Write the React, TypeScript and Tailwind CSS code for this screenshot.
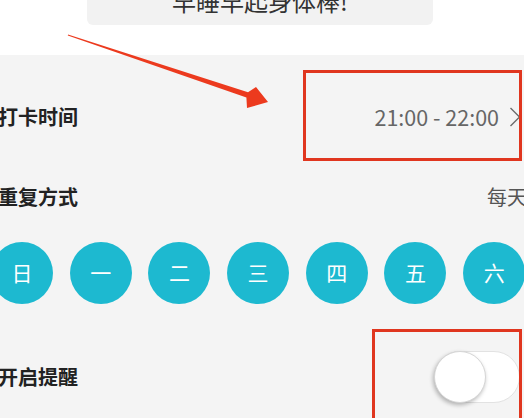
import React from 'react';

const days = ['日', '一', '二', '三', '四', '五', '六'];

function ChevronRight() {
  return (
    <svg width="12" height="22" viewBox="0 0 12 22" className="ml-[10px]">
      <path d="M1.5 2 L10.5 11 L1.5 20" fill="none" stroke="#6b6b6b" strokeWidth="1.4" />
    </svg>
  );
}

function Toggle() {
  return (
    <div className="relative h-[52px] w-[86px] rounded-full border border-[#e2e2e2] bg-white">
      <div className="absolute -left-px -top-px h-[52px] w-[52px] rounded-full border border-[#d6d6d6] bg-white shadow-[-1px_2px_4px_rgba(0,0,0,0.28)]" />
    </div>
  );
}

export default function App() {
  return (
    <div
      className="relative h-[418px] w-[524px] overflow-hidden bg-[#f4f4f4] text-[#222]"
      style={{ fontFamily: '"Noto Sans CJK SC", "Noto Sans", sans-serif' }}
    >
      {/* top header part */}
      <div className="flex h-[55px] flex-col bg-white">
        <div className="-mt-[24px] ml-[87px] flex h-[49px] w-[346px] items-center justify-center rounded-[6px] bg-[#f2f2f2] text-[24px] text-[#333]">
          早睡早起身体棒!
        </div>
      </div>

      {/* settings */}
      <div className="-ml-[2px]">
        <div className="flex h-[124px] items-center justify-between">
          <span className="text-[20px] font-bold">打卡时间</span>
          <div className="mr-[3px] flex items-center text-[21.5px] text-[#666]">
            <span>21:00 - 22:00</span>
            <ChevronRight />
          </div>
        </div>

        <div className="flex h-[36px] items-center justify-between">
          <span className="text-[20px] font-bold">重复方式</span>
          <span className="-mr-[3px] text-[20px] text-[#555]">每天</span>
        </div>

        <div className="-ml-[7px] mt-[27px] flex gap-[16.7px]">
          {days.map((d) => (
            <div
              key={d}
              className="flex h-[62px] w-[62px] shrink-0 items-center justify-center rounded-full bg-[#1db9d0] text-[21px] text-white"
            >
              {d}
            </div>
          ))}
        </div>

        <div className="flex h-[146px] items-center justify-between">
          <span className="text-[20px] font-bold">开启提醒</span>
          <div className="mr-[4px]">
            <Toggle />
          </div>
        </div>
      </div>

      {/* red annotations */}
      <div className="pointer-events-none absolute left-[303px] top-[70px] h-[91px] w-[219px] border-[3px] border-[#e0361f]" />
      <div className="pointer-events-none absolute left-[372px] top-[329px] h-[100px] w-[150px] border-[3px] border-[#e0361f]" />
      <svg className="pointer-events-none absolute left-0 top-0" width="524" height="418" viewBox="0 0 524 418">
        <polygon
          points="68,34.4 248,92.2 256,87 268,102 247,108 246.4,97.6 67.8,35.6"
          fill="#ec3a1e"
        />
      </svg>
    </div>
  );
}
